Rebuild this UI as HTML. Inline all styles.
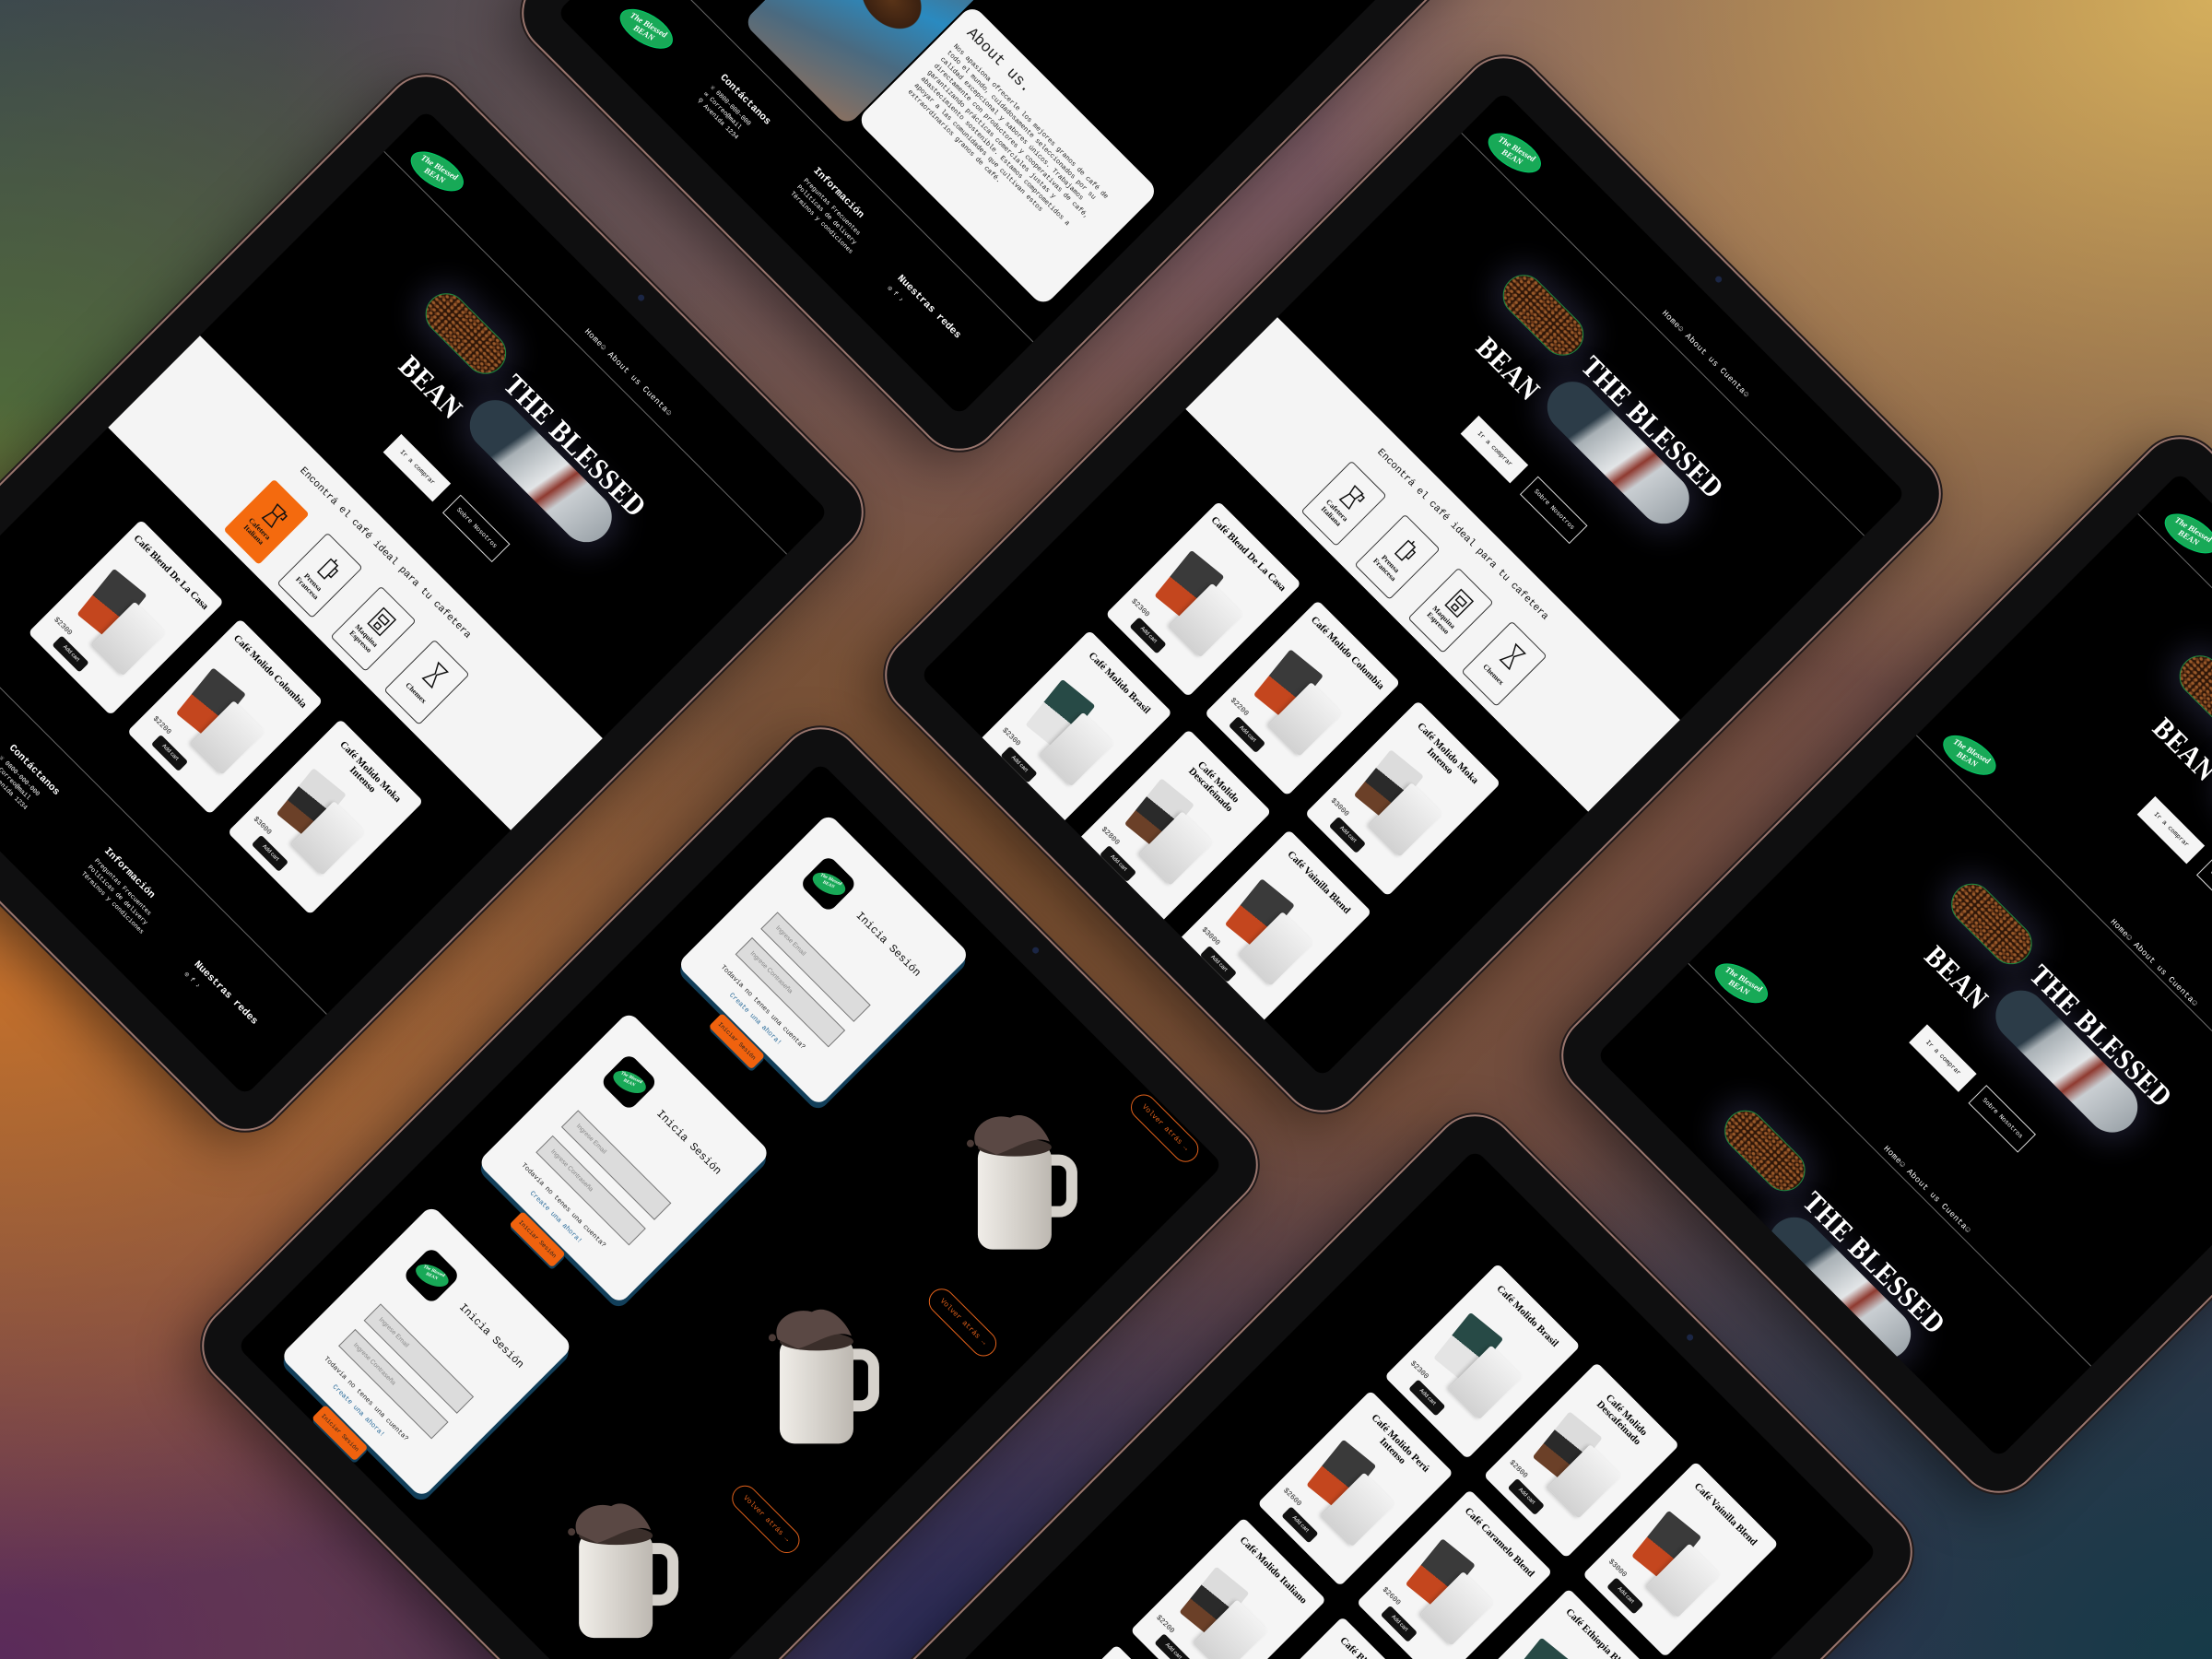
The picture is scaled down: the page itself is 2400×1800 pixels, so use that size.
<!DOCTYPE html>
<html><head><meta charset="utf-8">
<style>
*{margin:0;padding:0;box-sizing:border-box}
html,body{width:2400px;height:1800px;overflow:hidden}
#w{position:absolute;left:0;top:0;width:2400px;height:1800px;overflow:hidden;font-family:"Liberation Mono",monospace;
background:
radial-gradient(ellipse 1000px 800px at 2400px 0px,#d4ae5c,transparent),
radial-gradient(ellipse 900px 650px at 0px 1080px,#c26f2c,transparent),
radial-gradient(ellipse 700px 550px at 0px 480px,#4f6c3a,transparent),
radial-gradient(ellipse 900px 650px at 0px 1800px,#5a2a5a,transparent),
radial-gradient(ellipse 1100px 650px at 1100px 1800px,#26295a,transparent),
radial-gradient(ellipse 1000px 800px at 2400px 1800px,#163a48,transparent),
radial-gradient(ellipse 1000px 700px at 1300px 80px,#7d5c6a,transparent),
radial-gradient(ellipse 900px 700px at 1150px 900px,#7a5030,transparent),
linear-gradient(135deg,#3a4450,#86583f 50%,#3a3050);}
.dev{position:absolute;width:694px;height:972px;border-radius:44px;background:#0f0f10;transform:rotate(45deg);box-shadow:0 0 0 2px #9a766e,0 0 0 4px #221a1a,0 20px 60px rgba(0,0,0,.45)}
.cam{position:absolute;left:344px;top:14px;width:7px;height:7px;border-radius:50%;background:#1b2645}
.scr{position:absolute;left:38px;top:38px;width:618px;height:896px;background:#000;border-radius:12px;overflow:hidden}
.a{position:absolute}
.logo{position:absolute;width:64px;height:32px;border-radius:50%;background:#18a957;transform:rotate(-14deg);color:#fff;font:italic 900 9px/10px "Liberation Serif",serif;text-align:center;padding-top:5px;border:1px solid #0c6;}
.hl{position:absolute;left:0;width:618px;height:1px;background:#6a6a6a}
.nav{position:absolute;color:#fff;font:9px "Liberation Mono",monospace;white-space:nowrap;letter-spacing:.5px}
.p1{position:absolute;width:105px;height:45px;border-radius:23px;border:1px solid #1c8a40;background:radial-gradient(ellipse 2.5px 2px,#9a5a2a 0 60%,transparent 100%) 0 0/6px 5px,radial-gradient(ellipse 2.5px 2px,#6a3818 0 60%,transparent 100%) 3px 2px/7px 6px,#2e1608;box-shadow:0 0 30px 12px rgba(80,80,130,.3)}
.p2{position:absolute;width:195px;height:55px;border-radius:28px;background:linear-gradient(100deg,#2c3c48 0 28%,#a8b0b5 34%,#e2e5e7 55%,#8f3a30 62%,#c9ced2 70%,#9aa2a8);box-shadow:0 0 30px 12px rgba(80,80,130,.3)}
.ht{position:absolute;color:#fff;font:900 28px/30px "Liberation Serif",serif;letter-spacing:1px;white-space:nowrap;transform:scaleY(1.15)}
.b1{position:absolute;width:76px;height:28px;background:#f5f5f5;color:#000;font:7px/28px "Liberation Mono",monospace;text-align:center}
.b2{position:absolute;width:76px;height:28px;background:#000;border:1px solid #ddd;color:#fff;font:7px/26px "Liberation Mono",monospace;text-align:center}
.band{position:absolute;left:0;width:618px;background:#f4f4f4}
.bt{position:absolute;left:0;width:618px;text-align:center;font:11px "Liberation Mono",monospace;color:#111}
.cat{position:absolute;width:54px;height:78px;border:1px solid #333;border-radius:4px;background:#f5f5f5;text-align:center;font:900 8px/9px "Liberation Serif",serif;color:#111;padding-top:44px}
.cat svg{position:absolute;left:15px;top:12px}
.cat.or{background:#f46a0e;border-color:#f46a0e}
.card{position:absolute;width:127px;height:174px;background:#f5f5f5;border-radius:6px}
.ct{position:absolute;left:8px;right:8px;top:12px;text-align:center;font:900 11px/12px "Liberation Serif",serif;color:#000}
.g1{position:absolute;left:20px;top:56px;width:46px;height:64px;border-radius:3px;background:linear-gradient(#3a3a3a 0 58%,#c4461e 58%);transform:rotate(-6deg)}
.g1.w{background:linear-gradient(#274a46 0 50%,#e4e4e4 50%)}
.g1.b{background:linear-gradient(#dcdcdc 0 40%,#2a2a2a 40% 70%,#6b4028 70%)}
.g2{position:absolute;left:58px;top:68px;width:48px;height:66px;border-radius:3px;background:linear-gradient(#f2f2f2,#d2d2d2);box-shadow:-2px 2px 4px rgba(0,0,0,.2)}
.pr{position:absolute;left:10px;top:138px;font:8px "Liberation Mono",monospace;color:#222}
.ac{position:absolute;left:28px;top:150px;width:42px;height:15px;background:#111;color:#fff;font:6px/15px "Liberation Sans",sans-serif;border-radius:3px;text-align:center}
.ft{position:absolute;color:#fff;font:10px/13px "Liberation Mono",monospace}
.ft b{display:block;font-size:11px;margin-bottom:4px}
.ft i{display:block;font-style:normal;font-size:7px;line-height:10px}
.lc{position:absolute;width:218px;height:233px;background:#f5f5f5;border-radius:12px;box-shadow:4px 5px 0 #123f5a}
.lc .lg{position:absolute;left:32px;top:32px;width:45px;height:45px;background:#000;border-radius:10px}
.lc .lg div{position:absolute;left:4px;top:12px;width:38px;height:20px;border-radius:50%;background:#18a957;transform:rotate(-20deg);color:#fff;font:italic 900 5px/6px serif;text-align:center;padding-top:3px}
.lt{position:absolute;left:100px;top:48px;font:12px "Liberation Mono",monospace;color:#111;white-space:nowrap}
.in{position:absolute;left:37px;width:143px;height:26px;background:#dcdcdc;border:1px solid #777;color:#888;font:7px/24px "Liberation Sans",sans-serif;padding-left:10px}
.lq{position:absolute;left:36px;top:196px;font:7.5px "Liberation Mono",monospace;color:#222;white-space:nowrap}
.lk{position:absolute;left:64px;top:211px;font:7.5px "Liberation Mono",monospace;color:#2a6b9a;white-space:nowrap}
.lb{position:absolute;left:72px;top:235px;width:66px;height:21px;background:#f0620e;border-radius:4px;font:6.5px/21px "Liberation Mono",monospace;color:#222;text-align:center;box-shadow:2px 2px 0 #123f5a}
.vb{position:absolute;width:92px;height:28px;border:1.5px solid #e0601a;border-radius:14px;color:#e0601a;font:8px/25px "Liberation Mono",monospace;text-align:center}
.mug{position:absolute;transform:rotate(-45deg)}
</style></head><body><div id="w">

<!-- TABLET 2 (top) -->
<div class="dev" style="left:792px;top:-570px"><div class="cam"></div>
<div class="scr">
<div class="nav" style="left:292px;top:42px">Home☺ About us Cuenta☺</div>
<div class="hl" style="top:64px"></div>
<div class="a" style="left:150px;top:540px;width:160px;height:220px;border-radius:14px;background:radial-gradient(ellipse 60px 45px at 60% 40%,#5a3418,#3a2010 60%,transparent 62%),linear-gradient(160deg,#6a5048,#2a8ac0 45%,#4a6a80 70%,#8a7060)"></div>
<div class="a" style="left:312px;top:570px;width:287px;height:178px;background:#f5f5f5;border-radius:14px;padding:14px 18px;color:#222">
<div style="font:17px 'Liberation Mono',monospace;margin-bottom:8px">About us.</div>
<div style="font:7.5px/10px 'Liberation Mono',monospace">Nos apasiona ofrecerle los mejores granos de café de todo el mundo, cuidadosamente seleccionados por su calidad excepcional y sabores únicos. Trabajamos directamente con productores y cooperativas de café, garantizando prácticas comerciales justas y abastecimiento sostenible. Estamos comprometidos a apoyar a las comunidades que cultivan estos extraordinarios granos de café.</div></div>
<div class="hl" style="top:782px"></div>
<div class="logo" style="left:49px;top:823px">The Blessed<br>BEAN</div>
<div class="ft" style="left:175px;top:812px"><b>Contáctanos</b><i>☏ 0800-000-000</i><i>✉ Correo@mail</i><i>⚲ Avenida 1234</i></div>
<div class="ft" style="left:318px;top:812px"><b>Información</b><i>Preguntas Frecuentes</i><i>Políticas de delivery</i><i>Términos y condiciones</i></div>
<div class="ft" style="left:465px;top:830px"><b>Nuestras redes</b><i>◎ f ♪</i></div>
</div></div>

<!-- TABLET 1 (left) -->
<div class="dev" style="left:17px;top:168px"><div class="cam"></div>
<div class="scr">
<div class="logo" style="left:24px;top:23px">The Blessed<br>BEAN</div>
<div class="hl" style="top:64px"></div>
<div class="nav" style="left:292px;top:42px">Home☺ About us Cuenta☺</div>
<div class="p1" style="left:150px;top:119px"></div>
<div class="p2" style="left:268px;top:162px"></div>
<div class="ht" style="left:271px;top:130px">THE BLESSED</div>
<div class="ht" style="left:176px;top:196px">BEAN</div>
<div class="b1" style="left:230px;top:268px">Ir a comprar</div>
<div class="b2" style="left:322px;top:269px">Sobre Nosotros</div>
<div class="band" style="top:347px;height:141px"></div>
<div class="bt" style="top:366px">Encontrá el café ideal para tu cafetera</div>
<div class="cat or" style="left:167px;top:400px"><svg width="24" height="28" viewBox="0 0 24 28" fill="none" stroke="#111" stroke-width="1.5"><path d="M6 4h12l-2 10H8z M8 14l-3 12h14l-3-12 M18 6h4v6h-3"/></svg>Cafetera Italiana</div>
<div class="cat" style="left:249px;top:400px"><svg width="24" height="28" viewBox="0 0 24 28" fill="none" stroke="#111" stroke-width="1.5"><path d="M7 5h10v20H7z M12 1v4 M17 9h4v10h-4"/></svg>Prensa Francesa</div>
<div class="cat" style="left:331px;top:400px"><svg width="24" height="28" viewBox="0 0 24 28" fill="none" stroke="#111" stroke-width="1.5"><path d="M3 2h18v24H3z M7 8h10v6H7z M9 18h6v5H9z"/></svg>Maquina Espresso</div>
<div class="cat" style="left:413px;top:400px;padding-top:50px"><svg width="24" height="28" viewBox="0 0 24 28" fill="none" stroke="#111" stroke-width="1.5"><path d="M5 2h14l-6 11 6 13H5l6-13z"/></svg>Chemex</div>
<div class="card" style="left:96px;top:533px"><div class="ct">Café Blend De La Casa</div><div class="g1"></div><div class="g2"></div><div class="pr">$2300</div><div class="ac">Add cart</div></div>
<div class="card" style="left:248px;top:533px"><div class="ct">Café Molido Colombia</div><div class="g1"></div><div class="g2"></div><div class="pr">$2200</div><div class="ac">Add cart</div></div>
<div class="card" style="left:402px;top:533px"><div class="ct">Café Molido Moka Intenso</div><div class="g1 b"></div><div class="g2"></div><div class="pr">$3000</div><div class="ac">Add cart</div></div>
<div class="hl" style="top:770px"></div>
<div class="ft" style="left:170px;top:802px"><b>Contáctanos</b><i>☏ 0800-000-000</i><i>✉ Correo@mail</i><i>⚲ Avenida 1234</i></div>
<div class="ft" style="left:322px;top:808px"><b>Información</b><i>Preguntas Frecuentes</i><i>Políticas de delivery</i><i>Términos y condiciones</i></div>
<div class="ft" style="left:478px;top:826px"><b>Nuestras redes</b><i>◎ f ♪</i></div>
</div></div>

<!-- TABLET 3 (center) -->
<div class="dev" style="left:1186px;top:148px"><div class="cam"></div>
<div class="scr">
<div class="logo" style="left:24px;top:23px">The Blessed<br>BEAN</div>
<div class="hl" style="top:64px"></div>
<div class="nav" style="left:292px;top:42px">Home☺ About us Cuenta☺</div>
<div class="p1" style="left:150px;top:119px"></div>
<div class="p2" style="left:268px;top:162px"></div>
<div class="ht" style="left:271px;top:130px">THE BLESSED</div>
<div class="ht" style="left:176px;top:196px">BEAN</div>
<div class="b1" style="left:230px;top:268px">Ir a comprar</div>
<div class="b2" style="left:322px;top:269px">Sobre Nosotros</div>
<div class="band" style="top:347px;height:141px"></div>
<div class="bt" style="top:366px">Encontrá el café ideal para tu cafetera</div>
<div class="cat" style="left:167px;top:400px"><svg width="24" height="28" viewBox="0 0 24 28" fill="none" stroke="#111" stroke-width="1.5"><path d="M6 4h12l-2 10H8z M8 14l-3 12h14l-3-12 M18 6h4v6h-3"/></svg>Cafetera Italiana</div>
<div class="cat" style="left:249px;top:400px"><svg width="24" height="28" viewBox="0 0 24 28" fill="none" stroke="#111" stroke-width="1.5"><path d="M7 5h10v20H7z M12 1v4 M17 9h4v10h-4"/></svg>Prensa Francesa</div>
<div class="cat" style="left:331px;top:400px"><svg width="24" height="28" viewBox="0 0 24 28" fill="none" stroke="#111" stroke-width="1.5"><path d="M3 2h18v24H3z M7 8h10v6H7z M9 18h6v5H9z"/></svg>Maquina Espresso</div>
<div class="cat" style="left:413px;top:400px;padding-top:50px"><svg width="24" height="28" viewBox="0 0 24 28" fill="none" stroke="#111" stroke-width="1.5"><path d="M5 2h14l-6 11 6 13H5l6-13z"/></svg>Chemex</div>
<div class="card" style="left:96px;top:533px"><div class="ct">Café Blend De La Casa</div><div class="g1"></div><div class="g2"></div><div class="pr">$2300</div><div class="ac">Add cart</div></div>
<div class="card" style="left:248px;top:533px"><div class="ct">Café Molido Colombia</div><div class="g1"></div><div class="g2"></div><div class="pr">$2200</div><div class="ac">Add cart</div></div>
<div class="card" style="left:402px;top:533px"><div class="ct">Café Molido Moka Intenso</div><div class="g1 b"></div><div class="g2"></div><div class="pr">$3000</div><div class="ac">Add cart</div></div>
<div class="card" style="left:96px;top:731px"><div class="ct">Café Molido Brasil</div><div class="g1 w"></div><div class="g2"></div><div class="pr">$2300</div><div class="ac">Add cart</div></div>
<div class="card" style="left:248px;top:731px"><div class="ct">Café Molido Descafeinado</div><div class="g1 b"></div><div class="g2"></div><div class="pr">$2800</div><div class="ac">Add cart</div></div>
<div class="card" style="left:402px;top:731px"><div class="ct">Café Vainilla Blend</div><div class="g1"></div><div class="g2"></div><div class="pr">$3000</div><div class="ac">Add cart</div></div>
</div></div>

<!-- TABLET 4 (login) -->
<div class="dev" style="left:445px;top:876px"><div class="cam"></div>
<div class="scr">
<div class="lc" style="left:45px;top:33px"><div class="lg"><div>The Blessed<br>BEAN</div></div><div class="lt">Inicia Sesión</div><div class="in" style="top:115px">Ingrese Email</div><div class="in" style="top:154px">Ingrese Contraseña</div><div class="lq">Todavía no tenes una cuenta?</div><div class="lk">Create una ahora!</div><div class="lb">Iniciar Sesión</div></div>
<div class="lc" style="left:44px;top:338px"><div class="lg"><div>The Blessed<br>BEAN</div></div><div class="lt">Inicia Sesión</div><div class="in" style="top:115px">Ingrese Email</div><div class="in" style="top:154px">Ingrese Contraseña</div><div class="lq">Todavía no tenes una cuenta?</div><div class="lk">Create una ahora!</div><div class="lb">Iniciar Sesión</div></div>
<div class="lc" style="left:41px;top:638px"><div class="lg"><div>The Blessed<br>BEAN</div></div><div class="lt">Inicia Sesión</div><div class="in" style="top:115px">Ingrese Email</div><div class="in" style="top:154px">Ingrese Contraseña</div><div class="lq">Todavía no tenes una cuenta?</div><div class="lk">Create una ahora!</div><div class="lb">Iniciar Sesión</div></div>
<div class="vb" style="left:499px;top:3px">Volver atrás →</div>
<div class="vb" style="left:493px;top:307px">Volver atrás →</div>
<div class="vb" style="left:493px;top:609px">Volver atrás →</div>
<svg class="mug" style="left:407px;top:85px" width="140" height="160" viewBox="0 0 140 160"><defs><linearGradient id="m" x1="0" x2="1"><stop offset="0" stop-color="#f0ede8"/><stop offset="1" stop-color="#bdb8b1"/></linearGradient></defs><path d="M92 58h16a14 14 0 0 1 14 14v28a14 14 0 0 1-14 14H92" fill="none" stroke="#d6d2cc" stroke-width="12"/><rect x="20" y="40" width="80" height="115" rx="16" fill="url(#m)"/><ellipse cx="60" cy="44" rx="40" ry="10" fill="#3a2e2a"/><path d="M18 42C10 22 34 6 55 12C72 2 92 22 98 38C80 30 60 46 40 52Z" fill="#5a4844"/><circle cx="12" cy="40" r="4" fill="#4a3a36"/></svg>
<svg class="mug" style="left:404px;top:386px" width="140" height="160" viewBox="0 0 140 160"><path d="M92 58h16a14 14 0 0 1 14 14v28a14 14 0 0 1-14 14H92" fill="none" stroke="#d6d2cc" stroke-width="12"/><rect x="20" y="40" width="80" height="115" rx="16" fill="url(#m)"/><ellipse cx="60" cy="44" rx="40" ry="10" fill="#3a2e2a"/><path d="M18 42C10 22 34 6 55 12C72 2 92 22 98 38C80 30 60 46 40 52Z" fill="#5a4844"/><circle cx="12" cy="40" r="4" fill="#4a3a36"/></svg>
<svg class="mug" style="left:399px;top:689px" width="140" height="160" viewBox="0 0 140 160"><path d="M92 58h16a14 14 0 0 1 14 14v28a14 14 0 0 1-14 14H92" fill="none" stroke="#d6d2cc" stroke-width="12"/><rect x="20" y="40" width="80" height="115" rx="16" fill="url(#m)"/><ellipse cx="60" cy="44" rx="40" ry="10" fill="#3a2e2a"/><path d="M18 42C10 22 34 6 55 12C72 2 92 22 98 38C80 30 60 46 40 52Z" fill="#5a4844"/><circle cx="12" cy="40" r="4" fill="#4a3a36"/></svg>
</div></div>

<!-- TABLET 5 (right) -->
<div class="dev" style="left:1920px;top:561px"><div class="cam"></div>
<div class="scr">
<div class="logo" style="left:24px;top:23px">The Blessed<br>BEAN</div>
<div class="hl" style="top:64px"></div>
<div class="nav" style="left:292px;top:42px">Home☺ About us Cuenta☺</div>
<div class="p1" style="left:150px;top:119px"></div>
<div class="p2" style="left:268px;top:162px"></div>
<div class="ht" style="left:271px;top:130px">THE BLESSED</div>
<div class="ht" style="left:176px;top:196px">BEAN</div>
<div class="b1" style="left:230px;top:268px">Ir a comprar</div>
<div class="b2" style="left:322px;top:269px">Sobre Nosotros</div>
<div class="logo" style="left:24px;top:363px">The Blessed<br>BEAN</div>
<div class="hl" style="top:404px"></div>
<div class="nav" style="left:292px;top:392px">Home☺ About us Cuenta☺</div>
<div class="p1" style="left:150px;top:469px"></div>
<div class="p2" style="left:268px;top:512px"></div>
<div class="ht" style="left:271px;top:480px">THE BLESSED</div>
<div class="ht" style="left:176px;top:546px">BEAN</div>
<div class="b1" style="left:230px;top:618px">Ir a comprar</div>
<div class="b2" style="left:322px;top:619px">Sobre Nosotros</div>
<div class="logo" style="left:24px;top:713px">The Blessed<br>BEAN</div>
<div class="hl" style="top:754px"></div>
<div class="nav" style="left:292px;top:740px">Home☺ About us Cuenta☺</div>
<div class="p1" style="left:150px;top:817px"></div>
<div class="p2" style="left:268px;top:860px"></div>
<div class="ht" style="left:271px;top:828px">THE BLESSED</div>
<div class="ht" style="left:176px;top:894px">BEAN</div>
</div></div>

<!-- TABLET 6 (bottom) -->
<div class="dev" style="left:1155px;top:1296px"><div class="cam"></div>
<div class="scr">
<div class="card" style="left:105px;top:70px"><div class="ct">Café Molido Brasil</div><div class="g1 w"></div><div class="g2"></div><div class="pr">$2300</div><div class="ac">Add cart</div></div>
<div class="card" style="left:257px;top:70px"><div class="ct">Café Molido Descafeinado</div><div class="g1 b"></div><div class="g2"></div><div class="pr">$2800</div><div class="ac">Add cart</div></div>
<div class="card" style="left:409px;top:70px"><div class="ct">Café Vainilla Blend</div><div class="g1"></div><div class="g2"></div><div class="pr">$3000</div><div class="ac">Add cart</div></div>
<div class="card" style="left:105px;top:265px"><div class="ct">Café Molido Perú Intenso</div><div class="g1"></div><div class="g2"></div><div class="pr">$2600</div><div class="ac">Add cart</div></div>
<div class="card" style="left:257px;top:265px"><div class="ct">Café Caramelo Blend</div><div class="g1"></div><div class="g2"></div><div class="pr">$2600</div><div class="ac">Add cart</div></div>
<div class="card" style="left:409px;top:265px"><div class="ct">Café Ethiopia Blend</div><div class="g1 w"></div><div class="g2"></div><div class="pr">$2900</div><div class="ac">Add cart</div></div>
<div class="card" style="left:105px;top:460px"><div class="ct">Café Molido Italiano</div><div class="g1 b"></div><div class="g2"></div><div class="pr">$2200</div><div class="ac">Add cart</div></div>
<div class="card" style="left:257px;top:460px"><div class="ct">Café Blend Especial</div><div class="g1"></div><div class="g2"></div><div class="pr">$2400</div><div class="ac">Add cart</div></div>
<div class="card" style="left:409px;top:460px"><div class="ct">Café Molido Colombia</div><div class="g1"></div><div class="g2"></div><div class="pr">$2200</div><div class="ac">Add cart</div></div>
<div class="card" style="left:105px;top:655px"><div class="ct">Café Molido Brasil</div><div class="g1 w"></div><div class="g2"></div><div class="pr">$2300</div><div class="ac">Add cart</div></div>
<div class="card" style="left:257px;top:655px"><div class="ct">Café Blend De La Casa</div><div class="g1"></div><div class="g2"></div><div class="pr">$2300</div><div class="ac">Add cart</div></div>
</div></div>

</div></body></html>
